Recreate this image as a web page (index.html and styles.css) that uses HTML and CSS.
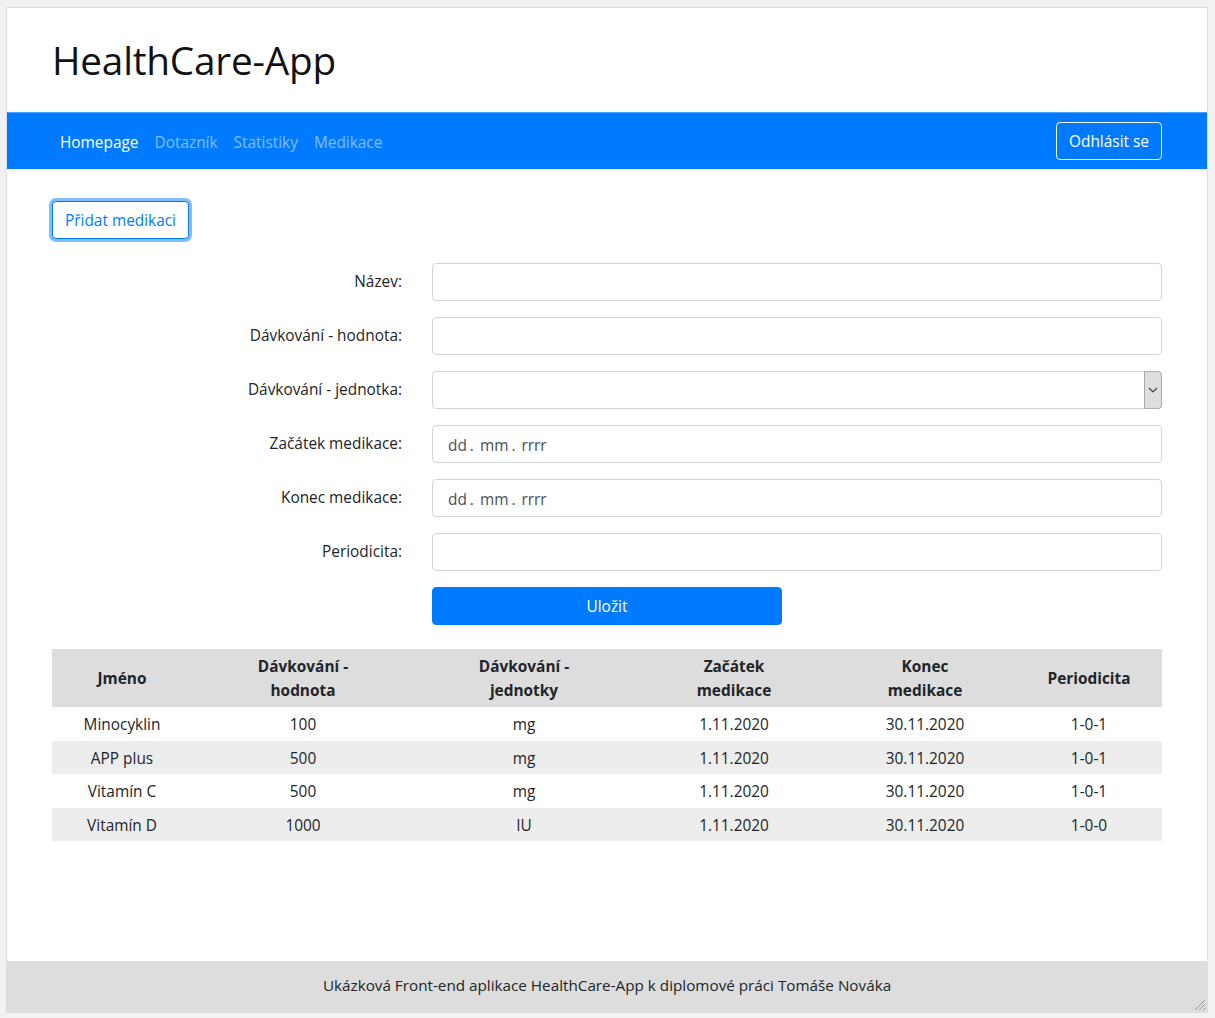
FILE: index.html
```html
<!DOCTYPE html>
<html lang="cs">
<head>
<meta charset="utf-8">
<title>HealthCare-App</title>
<link rel="stylesheet" href="styles.css">
</head>
<body>
<div class="frame">
  <header class="site-header">
    <div class="container">
      <h1 class="brand">HealthCare-App</h1>
    </div>
  </header>
  <nav class="navbar">
    <div class="container nav-inner">
      <ul class="nav-links">
        <li><a class="nav-link active" href="#">Homepage</a></li>
        <li><a class="nav-link" href="#">Dotazník</a></li>
        <li><a class="nav-link" href="#">Statistiky</a></li>
        <li><a class="nav-link" href="#">Medikace</a></li>
      </ul>
      <button class="btn btn-outline-light">Odhlásit se</button>
    </div>
  </nav>
  <main class="main">
    <div class="container">
      <button class="btn btn-outline-primary focus">Přidat medikaci</button>
      <form class="med-form">
        <div class="form-row">
          <label class="form-label">Název:</label>
          <div class="form-field"><input class="form-control" type="text"></div>
        </div>
        <div class="form-row">
          <label class="form-label">Dávkování - hodnota:</label>
          <div class="form-field"><input class="form-control" type="text"></div>
        </div>
        <div class="form-row">
          <label class="form-label">Dávkování - jednotka:</label>
          <div class="form-field select-wrap">
            <select class="form-control select"><option></option></select>
            <span class="select-arrow"><svg width="10" height="6" viewBox="0 0 10 6"><path d="M1 1 L5 5 L9 1" fill="none" stroke="#444" stroke-width="1.2"/></svg></span>
          </div>
        </div>
        <div class="form-row">
          <label class="form-label">Začátek medikace:</label>
          <div class="form-field"><div class="form-control date">dd<span class="sep">.</span>mm<span class="sep">.</span>rrrr</div></div>
        </div>
        <div class="form-row">
          <label class="form-label">Konec medikace:</label>
          <div class="form-field"><div class="form-control date">dd<span class="sep">.</span>mm<span class="sep">.</span>rrrr</div></div>
        </div>
        <div class="form-row">
          <label class="form-label">Periodicita:</label>
          <div class="form-field"><input class="form-control" type="text"></div>
        </div>
        <div class="form-row">
          <div class="form-label"></div>
          <div class="form-field"><button type="button" class="btn btn-primary save">Uložit</button></div>
        </div>
      </form>
      <table class="med-table">
        <colgroup>
          <col class="c1"><col class="c2"><col class="c3"><col class="c4"><col class="c5"><col class="c6">
        </colgroup>
        <thead>
          <tr>
            <th>Jméno</th>
            <th>Dávkování -<br>hodnota</th>
            <th>Dávkování -<br>jednotky</th>
            <th>Začátek<br>medikace</th>
            <th>Konec<br>medikace</th>
            <th>Periodicita</th>
          </tr>
        </thead>
        <tbody>
          <tr><td>Minocyklin</td><td>100</td><td>mg</td><td>1.11.2020</td><td>30.11.2020</td><td>1-0-1</td></tr>
          <tr><td>APP plus</td><td>500</td><td>mg</td><td>1.11.2020</td><td>30.11.2020</td><td>1-0-1</td></tr>
          <tr><td>Vitamín C</td><td>500</td><td>mg</td><td>1.11.2020</td><td>30.11.2020</td><td>1-0-1</td></tr>
          <tr><td>Vitamín D</td><td>1000</td><td>IU</td><td>1.11.2020</td><td>30.11.2020</td><td>1-0-0</td></tr>
        </tbody>
      </table>
    </div>
  </main>
  <footer class="site-footer">
    Ukázková Front-end aplikace HealthCare-App k diplomové práci Tomáše Nováka
    <svg class="grip" width="14" height="14" viewBox="0 0 14 14"><path d="M13 3 L3 13 M13 7 L7 13 M13 11 L11 13" stroke="#999" stroke-width="1" fill="none"/></svg>
  </footer>
</div>
</body>
</html>
```
FILE: styles.css
```css
* { box-sizing: border-box; }
html, body { margin: 0; }
body {
  background: #f2f2f2;
  padding: 7px 0 0 6px;
  font-family: "Open Sans", "Noto Sans", sans-serif;
  font-size: 15.4px;
  line-height: 24px;
  color: #212529;
}
.frame {
  position: relative;
  width: 1202px;
  min-height: 1006px;
  background: #fff;
  border: 1px solid #dcdcdc;
  display: flex;
  flex-direction: column;
}
.container {
  width: 1140px;
  margin: 0 auto;
  padding: 0 15px;
}
.site-header { padding: 28px 0; }
.brand {
  margin: 0;
  font-weight: 400;
  font-size: 38.7px;
  line-height: 48px;
  letter-spacing: -0.2px;
  color: #111;
}
.navbar {
  background: #007bff;
  border-top: 1px solid #4ea2ff;
  padding: 8px 0;
}
.nav-inner { display: flex; align-items: center; justify-content: space-between; }
.nav-links { display: flex; list-style: none; margin: 0; padding: 0; }
.nav-link {
  display: block;
  padding: 10px 8px 6px;
  color: rgba(255,255,255,.5);
  text-decoration: none;
}
.nav-link.active { color: #fff; }
.btn {
  font-family: inherit;
  font-size: 15.4px;
  line-height: 24px;
  padding: 7px 12px 5px;
  border-radius: 4px;
  border: 1px solid transparent;
  background: transparent;
  cursor: pointer;
}
.btn-outline-light { color: #fff; border-color: #f8f9fa; }
.btn-outline-primary { color: #007bff; border-color: #007bff; background: #fff; }
.btn-outline-primary.focus { box-shadow: 0 0 0 3px rgba(0,123,255,.5); margin-top: 1px; }
.btn-primary { background: #007bff; color: #fff; border-color: #007bff; }
.main { flex: 1; padding-top: 31px; }
.main .focus { margin-bottom: 24px; }
.med-form { margin: 0 -15px; }
.form-row { display: flex; margin-bottom: 16px; }
.form-label {
  width: 380px;
  padding: 7px 15px;
  text-align: right;
  line-height: 24px;
}
.form-field { width: 760px; padding: 0 15px; position: relative; }
.form-control {
  display: block;
  width: 100%;
  height: 38px;
  padding: 6px 12px;
  font-family: inherit;
  font-size: 15.4px;
  line-height: 24px;
  color: #495057;
  background: #fff;
  border: 1px solid #ced4da;
  border-radius: 4px;
}
.select { appearance: none; -webkit-appearance: none; }
.select-arrow {
  position: absolute;
  right: 15px;
  top: 0;
  width: 18px;
  height: 38px;
  background: #dedede;
  border: 1px solid #aaa;
  border-radius: 0 4px 4px 0;
  display: flex;
  align-items: center;
  justify-content: center;
}
.date { padding-left: 15px; padding-top: 8px; color: #495057; }
.sep { margin: 0 6px 0 3px; }
.save { width: 350px; display: block; }
.med-table {
  width: 1110px;
  border-collapse: collapse;
  margin-top: 24px;
  text-align: center;
}
.c1 { width: 140px; } .c2 { width: 222px; } .c3 { width: 220px; }
.c4 { width: 200px; } .c5 { width: 182px; } .c6 { width: 146px; }
.med-table th {
  background: #dddddd;
  font-weight: 700;
  padding: 6px 12px 4px;
  line-height: 24px;
  vertical-align: middle;
}
.med-table td { padding: 6px 12px 3px; line-height: 24.5px; }
.med-table tbody tr:nth-child(even) td { background: #ededed; }
.site-footer {
  background: #dddddd;
  text-align: center;
  padding: 12px 0 15px;
  line-height: 24px;
  font-size: 15.25px;
}
.grip { position: absolute; right: 1px; bottom: 1px; }
```
